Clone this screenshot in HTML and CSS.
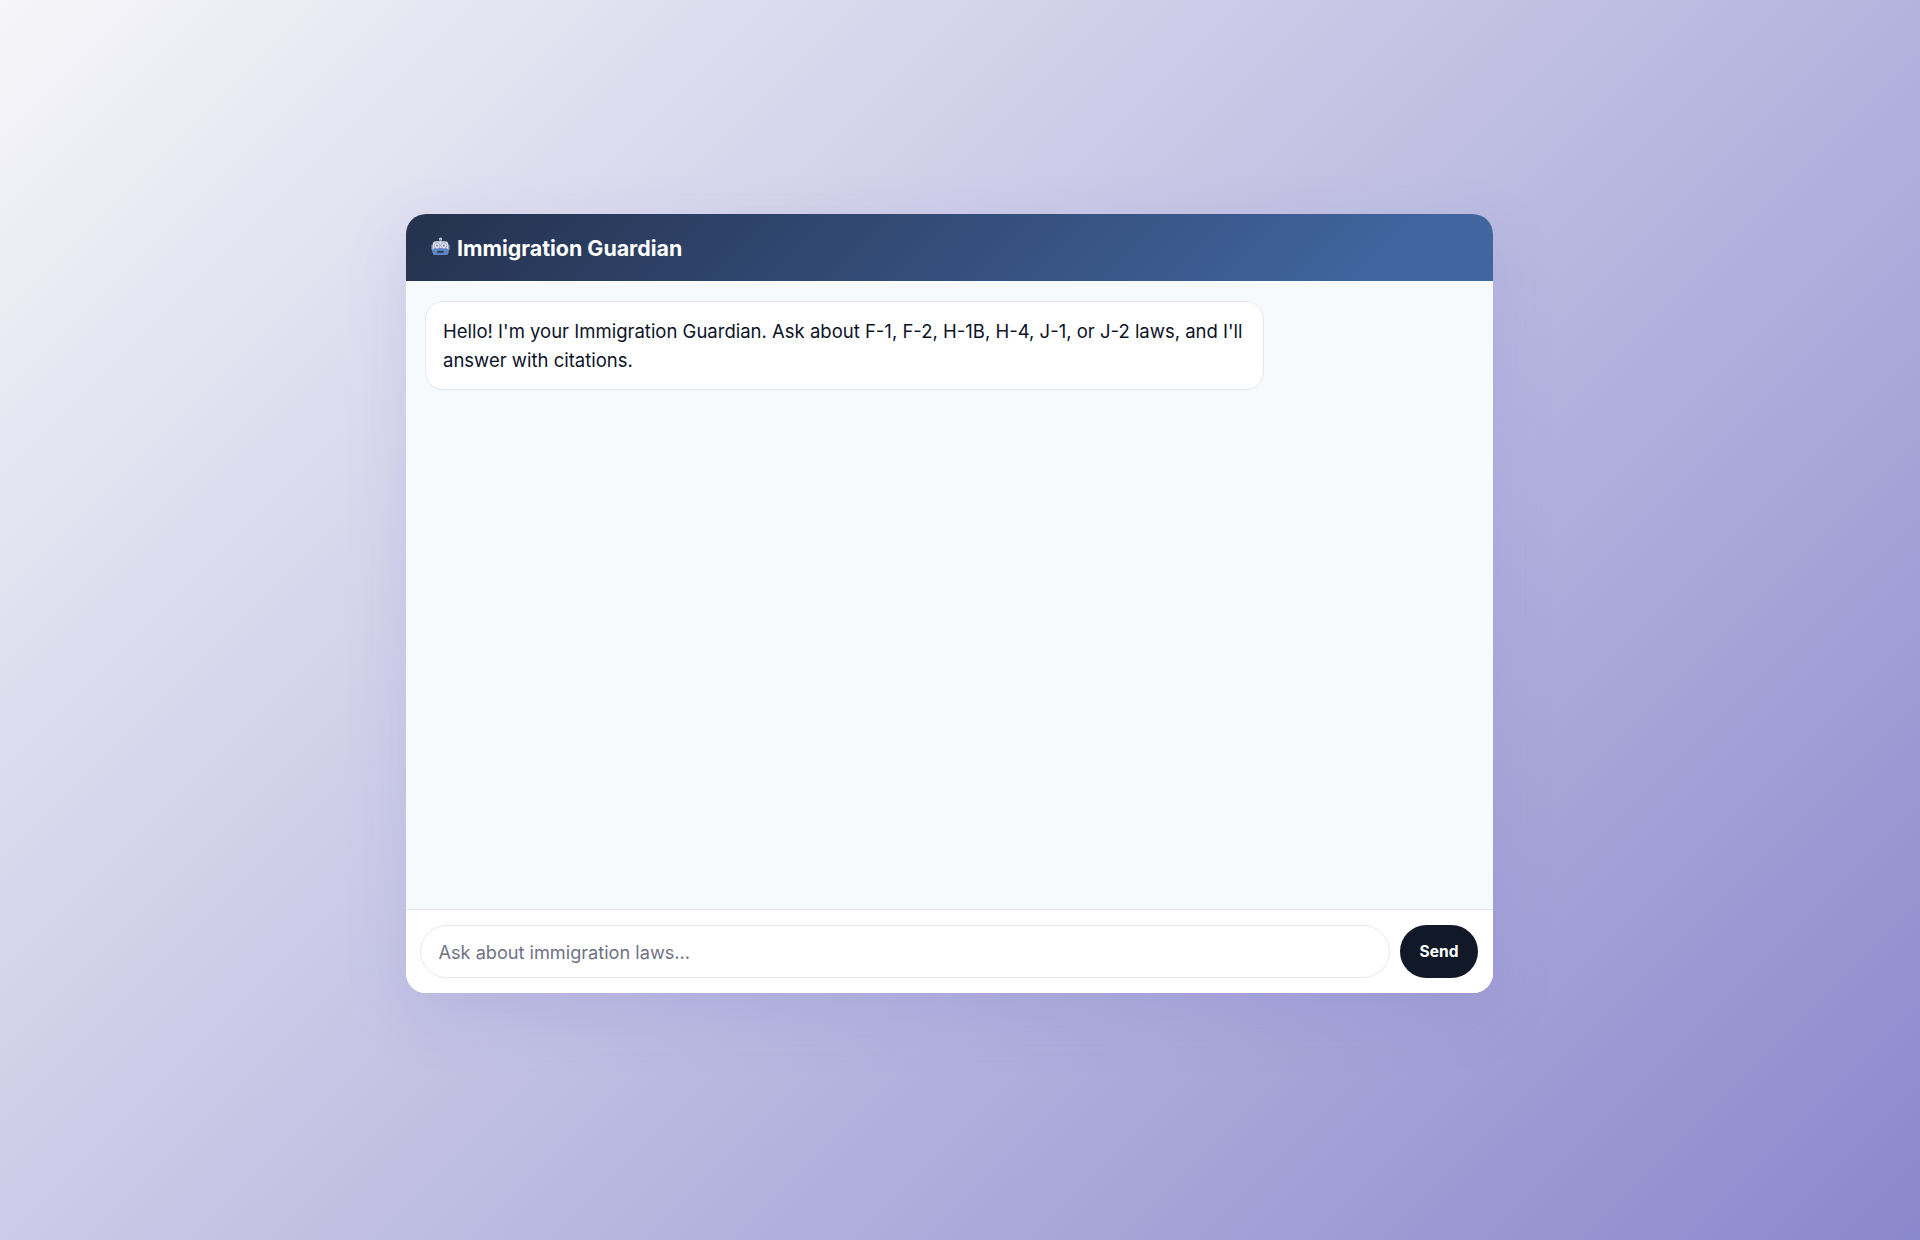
FILE: index.html
```html
<!DOCTYPE html>
<html lang="en">
  <head>
    <meta charset="UTF-8" />
    <meta name="viewport" content="width=device-width, initial-scale=1.0" />
    <title>Immigration Guardian</title>
    <link rel="stylesheet" href="styles.css">
  </head>

  <body>
    <div class="chat">
      <!-- header -->
      <div class="chat-header">
        <svg class="bot-icon" viewBox="0 0 20 20" aria-hidden="true">
          <circle cx="10" cy="2.2" r="1.7" fill="#c9cfd8" />
          <rect x="9.2" y="2.5" width="1.6" height="3" fill="#8d97a8" />
          <rect x="0.4" y="8" width="2.4" height="6" rx="1" fill="#7f93b8" />
          <rect x="17.2" y="8" width="2.4" height="6" rx="1" fill="#7f93b8" />
          <rect x="1.8" y="4.6" width="16.4" height="14.4" rx="3.6" fill="#dfe3ee" />
          <rect x="1.8" y="11.6" width="16.4" height="7.4" rx="3" fill="#5f86c4" />
          <circle cx="6.4" cy="9" r="3" fill="#fff" stroke="#8d97c4" stroke-width="1" />
          <circle cx="13.6" cy="9" r="3" fill="#fff" stroke="#8d97c4" stroke-width="1" />
          <circle cx="6.4" cy="9" r="1.2" fill="#5a6fb0" />
          <circle cx="13.6" cy="9" r="1.2" fill="#5a6fb0" />
          <rect x="6.6" y="14.4" width="6.8" height="2.4" rx="0.6" fill="#33425f" />
        </svg>
        <span>Immigration Guardian</span>
      </div>

      <!-- messages -->
      <div class="chat-body">
        <div class="bubble">Hello! I'm your Immigration Guardian. Ask about F-1, F-2, H-1B, H-4, J-1, or J-2 laws, and I'll answer with citations.</div>
      </div>

      <!-- input row -->
      <div class="chat-footer">
        <input class="chat-input" type="text" placeholder="Ask about immigration laws..." />
        <button class="send-btn">Send</button>
      </div>
    </div>
  </body>
</html>
```

FILE: styles.css
```css
* {
  margin: 0;
  padding: 0;
  box-sizing: border-box;
}

html,
body {
  height: 100%;
}

body {
  font-family: Inter, "Liberation Sans", sans-serif;
  background: linear-gradient(135deg, #f6f6f9 0%, #8a88cc 100%);
  padding: 214px 427px 247px 406px;
}

.chat {
  height: 779px;
  display: flex;
  flex-direction: column;
  background: #fff;
  border-radius: 20px;
  overflow: hidden;
  box-shadow: 0 20px 60px rgba(120, 115, 205, 0.18);
}

.chat-header {
  height: 67px;
  flex-shrink: 0;
  display: flex;
  align-items: center;
  gap: 7px;
  padding: 0 25px;
  background: linear-gradient(135deg, #25314d 0%, #40659f 90%);
  color: #fff;
  font-size: 21.4px;
  font-weight: 700;
}

.bot-icon {
  width: 19px;
  height: 19px;
  margin-bottom: 3px;
}

.chat-body {
  flex: 1;
  padding: 20px 19px;
  background: #f6fafd;
}

.bubble {
  width: 839px;
  padding: 15px 17px 13px;
  background: #fff;
  border: 1px solid #e6e6f0;
  border-radius: 18px;
  color: #0c1329;
  font-size: 18.5px;
  line-height: 29.4px;
}

.chat-footer {
  height: 84px;
  flex-shrink: 0;
  display: flex;
  gap: 10px;
  padding: 15px 15px 15px 14px;
  background: #fff;
  border-top: 1px solid #e6e6f0;
}

.chat-input {
  flex: 1;
  height: 53px;
  padding: 1px 17.5px 0;
  border: 1px solid #e6e6f0;
  border-radius: 27px;
  outline: none;
  font-family: inherit;
  font-size: 18.15px;
}

.chat-input::placeholder {
  color: #6f7285;
}

.send-btn {
  width: 78px;
  height: 53px;
  border: none;
  border-radius: 27px;
  background: #111827;
  color: #fff;
  font-family: inherit;
  font-size: 15.5px;
  font-weight: 700;
}
```
